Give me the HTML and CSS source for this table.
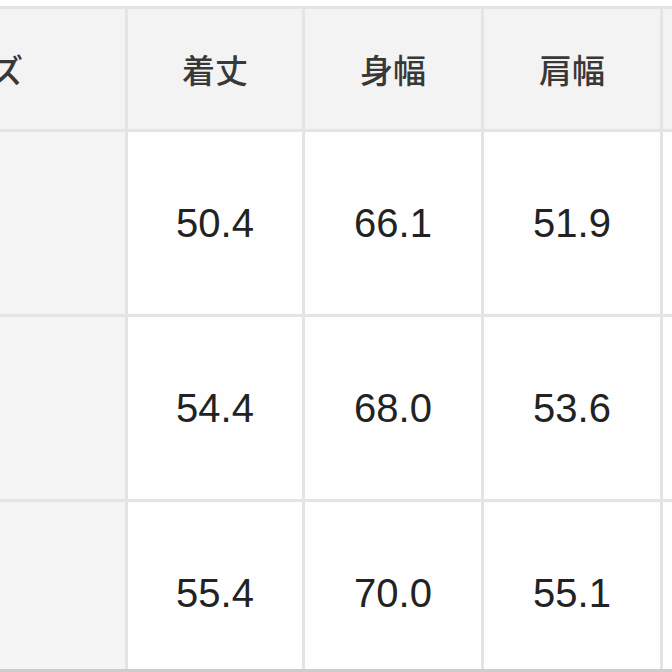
FILE: index.html
```html
<!DOCTYPE html>
<html lang="ja">
<head>
<meta charset="utf-8">
<link rel="stylesheet" href="styles.css">
</head>
<body>
<div class="sheet">
  <div class="cell head first">サイズ</div>
  <div class="cell head">着丈</div>
  <div class="cell head">身幅</div>
  <div class="cell head">肩幅</div>
  <div class="cell head"></div>

  <div class="cell side"></div>
  <div class="cell num">50.4</div>
  <div class="cell num">66.1</div>
  <div class="cell num">51.9</div>
  <div class="cell num"></div>

  <div class="cell side"></div>
  <div class="cell num">54.4</div>
  <div class="cell num">68.0</div>
  <div class="cell num">53.6</div>
  <div class="cell num"></div>

  <div class="cell side last"></div>
  <div class="cell num last">55.4</div>
  <div class="cell num last">70.0</div>
  <div class="cell num last">55.1</div>
  <div class="cell num last"></div>
</div>
</body>
</html>
```

FILE: styles.css
```css
html, body {
  margin: 0;
  padding: 0;
  background: #ffffff;
  overflow: hidden;
  width: 672px;
  height: 672px;
}

.sheet {
  margin-top: 6px;
  margin-left: -100px;
  width: 900px;
  display: grid;
  grid-template-columns: 225px 174px 176px 176px 140px;
  grid-template-rows: 120px 182px 182px 167px;
  column-gap: 3px;
  row-gap: 3px;
  padding-top: 3px;
  background: #e4e4e6;
  border-bottom: 3px solid #cdcdcf;
}

.cell {
  display: flex;
  align-items: center;
  justify-content: center;
  background: #fefefe;
}

.head {
  background: #f3f3f4;
  color: #383838;
  font-family: "Noto Sans CJK JP", "Noto Sans", sans-serif;
  font-size: 33px;
  font-weight: 500;
}

.head.first {
  justify-content: flex-start;
  padding-left: 25px;
}

.side {
  background: #f5f5f6;
}

.num {
  color: #222222;
  font-family: "Liberation Sans", Arial, sans-serif;
  font-size: 40px;
}

.last {
  padding-top: 15px;
}
```
